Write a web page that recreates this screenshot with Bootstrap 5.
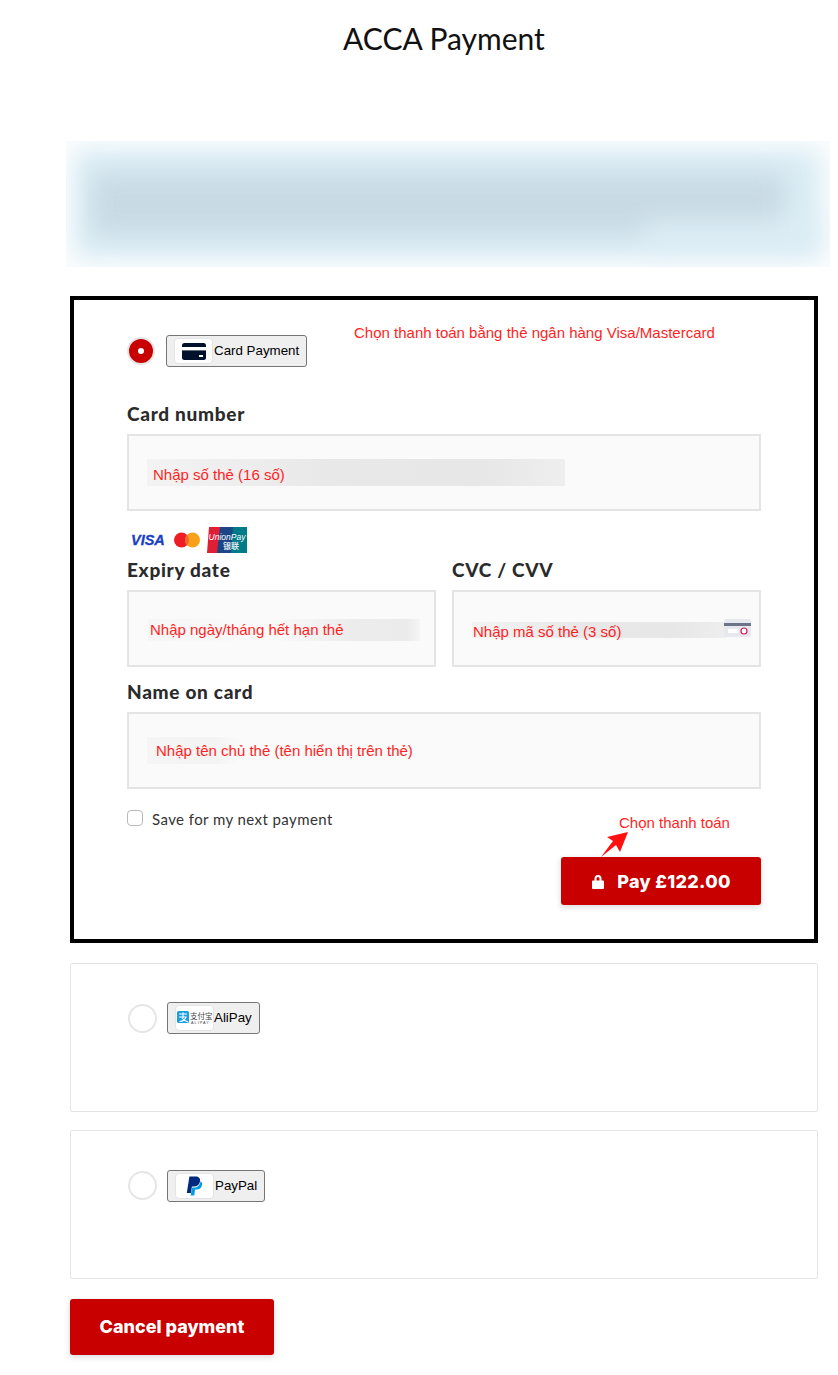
<!DOCTYPE html>
<html lang="en">
<head>
  <meta charset="UTF-8" />
  <meta name="viewport" content="width=device-width, initial-scale=1.0"/>
  <title>ACCA Payment</title>
  <link href="https://cdn.jsdelivr.net/npm/bootstrap@5.3.3/dist/css/bootstrap.min.css" rel="stylesheet"/>
  <style>
    body {
      background: #fff;
      font-family: 'Lato', sans-serif;
      color: #2b2b2b;
    }
    .page-wrap {
      width: 838px;
      height: 1375px;
      padding: 0 20px 0 70px;
      overflow: hidden;
    }
    .page-title {
      font-family: 'Lato', sans-serif;
      font-size: 30px;
      font-weight: 400;
      color: #111;
      text-align: center;
      line-height: 38px;
      margin: 0;
      padding-top: 19px;
      height: 141px;
    }
    .blur-box {
      margin: 0 -12px 29px -4px;
      height: 126px;
      background: #dbedf5;
      box-shadow: inset 0 0 24px 8px rgba(255,255,255,.9);
      overflow: hidden;
      padding: 32px 45px 0 26px;
    }
    .blur-text {
      height: 62px;
      background: #c8dae3;
      filter: blur(12px);
      position: relative;
    }
    .blur-text::after {
      content: "";
      position: absolute;
      right: -30px;
      bottom: -12px;
      width: 170px;
      height: 26px;
      background: #dcedf5;
    }
    .pay-card {
      border: 1px solid #e4e4e4;
      border-radius: 2px;
      height: 149px;
      margin-bottom: 18px;
      padding: 38px 57px 0;
    }
    .pay-card.paypal-card { padding-top: 39px; }
    .pay-card.selected {
      position: relative;
      border: 4px solid #000;
      border-radius: 0;
      height: 647px;
      margin-bottom: 20px;
      padding: 35px 53px 0;
    }
    .method-radio {
      width: 29px;
      height: 29px;
      border: 2.5px solid #e6e6e6;
      border-radius: 50%;
      background: #fff;
      flex: none;
      margin-right: 2px;
    }
    .paypal-card .method-radio { margin-bottom: 2px; }
    .method-radio.on {
      width: 28px;
      height: 28px;
      margin-right: 3px;
      background: #c80000;
      display: flex;
      align-items: center;
      justify-content: center;
    }
    .method-radio.on::after {
      content: "";
      width: 6px;
      height: 6px;
      background: #fff;
      border-radius: 50%;
    }
    .method-btn {
      display: flex;
      align-items: center;
      height: 32px;
      padding: 0 7px;
      background: #efefef;
      border: 1px solid #767676;
      border-radius: 3px;
      font-family: 'Liberation Sans', sans-serif;
      font-size: 13.33px;
      color: #000;
    }
    .method-name { margin-left: 1px; }
    .method-logo {
      width: 39px;
      height: 26px;
      background: #fff;
      border: 1px solid #e4e4e4;
      border-radius: 4px;
      display: flex;
      align-items: center;
      justify-content: center;
      flex: none;
    }
    .hint-top {
      position: absolute;
      left: 280px;
      top: 22px;
      font-family: 'Liberation Sans', sans-serif;
      font-size: 15px;
      color: #ff1f1f;
    }
    .field-label {
      font-size: 19px;
      font-weight: 900;
      line-height: 20px;
      letter-spacing: .7px;
      color: #2b2b2b;
      margin: 0 0 10px;
      display: block;
    }
    .label-number { margin-top: 37px; }
    .label-name { margin-top: 15px; }
    .field-box {
      position: relative;
      height: 77px;
      background: #fafafa;
      border: 2px solid #e4e4e4;
      display: flex;
      align-items: center;
      font-family: 'Liberation Sans', sans-serif;
      font-size: 15px;
      color: #ff1f1f;
    }
    .field-half { width: 309px; }
    .smear {
      margin-left: 18px;
      height: 27px;
      line-height: 28px;
      white-space: nowrap;
      background: linear-gradient(90deg, #f3f3f3, #e8e8e8 45%, #e7e7e7 80%, #eee);
    }
    .smear-number { width: 418px; padding-left: 6px; line-height: 31px; }
    .smear-expiry {
      width: 272px;
      height: 22px;
      line-height: 22px;
      margin-top: 3px;
      padding-left: 2px;
      margin-left: 19px;
      background: linear-gradient(90deg, #f6f6f6, #fafafa 45%, #ececec 75%, #ebebeb 95%, #f5f5f5);
    }
    .smear-cvc {
      width: 254px;
      height: 16px;
      line-height: 20px;
      margin-top: 3px;
      padding-left: 1px;
    }
    .smear-name {
      width: 94px;
      padding-left: 9px;
      background: linear-gradient(90deg, #f5f5f5, #f3f3f3 70%, #fafafa);
    }
    .cvc-tag {
      position: absolute;
      right: 8px;
      top: 27px;
      width: 27px;
      height: 18px;
      border-radius: 2px;
      background: #e6e8ee;
    }
    .cards-row { margin: 16px 0 7px; }
    .save-row {
      height: 24px;
      margin-top: 17px;
    }
    .save-check {
      width: 16px;
      height: 16px;
      margin: 0;
      border: 1px solid #b9b9b9;
      border-radius: 3px;
    }
    .save-label {
      font-size: 15px;
      letter-spacing: .42px;
      color: #333;
      margin: 3px 0 0 1px;
    }
    .hint-pay {
      position: absolute;
      left: 545px;
      top: 512px;
      font-family: 'Liberation Sans', sans-serif;
      font-size: 15px;
      color: #ff1f1f;
    }
    .hint-arrow {
      position: absolute;
      left: 527px;
      top: 532px;
    }
    .pay-row { margin-top: 27px; }
    .btn-acca {
      background: #c80000;
      border: 0;
      border-radius: 3px;
      color: #fff;
      font-weight: 800;
      font-family: 'Inter', sans-serif;
      box-shadow: 0 2px 6px rgba(0,0,0,.15);
    }
    .btn-acca:hover {
      background: #b00000;
      color: #fff;
    }
    .btn-pay {
      width: 200px;
      height: 48px;
      font-size: 18px;
      letter-spacing: .3px;
    }
    .btn-cancel {
      width: 204px;
      height: 56px;
      font-size: 18px;
      margin-top: 2px;
      padding-bottom: 8px;
    }
  </style>
</head>
<body>

<div class="page-wrap">
  <h1 class="page-title">ACCA Payment</h1>

  <!-- blurred notice -->
  <div class="blur-box"><div class="blur-text"></div></div>

  <!-- Card payment -->
  <div class="pay-card selected">
    <div class="d-flex align-items-center gap-2">
      <div class="method-radio on"></div>
      <div class="method-btn">
        <span class="method-logo">
          <svg width="24" height="17" viewBox="0 0 24 17"><rect width="24" height="17" rx="2.5" fill="#00112c"/><rect y="4" width="24" height="3.400" fill="#fff"/><rect x="17" y="12" width="4" height="2" fill="#fff"/></svg>
        </span>
        <span class="method-name">Card Payment</span>
      </div>
    </div>
    <div class="hint-top">Chọn thanh toán bằng thẻ ngân hàng Visa/Mastercard</div>

    <label class="field-label label-number">Card number</label>
    <div class="field-box">
      <div class="smear smear-number">Nhập số thẻ (16 số)</div>
    </div>

    <!-- accepted cards -->
    <div class="d-flex align-items-center cards-row">
      <svg width="120" height="26" viewBox="0 0 120 26">
        <text x="4" y="18" font-family="Liberation Sans" font-size="14.500" font-weight="700" font-style="italic" fill="#1a3fc4" stroke="#1a3fc4" stroke-width=".3">VISA</text>
        <circle cx="54.500" cy="13" r="7.500" fill="#ee1c25"/><circle cx="65.500" cy="13" r="7.500" fill="#f9a01b"/>
        <path d="M60 7.900a7.500 7.500 0 0 1 0 10.200a7.500 7.500 0 0 1 0-10.200z" fill="#f4642a"/>
        <polygon points="82,0 96,0 92,26 80,26" fill="#e01e36"/><polygon points="93,0 108,0 106,26 90,26" fill="#1c4585"/><polygon points="106,0 120,0 120,26 104,26" fill="#007b8a"/>
        <text x="100" y="13" text-anchor="middle" font-family="Liberation Sans" font-size="8.500" font-style="italic" fill="#fff">UnionPay</text>
        <text x="104" y="22" text-anchor="middle" font-family="'Noto Sans CJK SC'" font-size="8" font-weight="700" fill="#dfe9ee">银联</text>
      </svg>
    </div>

    <div class="row g-0 justify-content-between">
      <div class="col-auto">
        <label class="field-label">Expiry date</label>
        <div class="field-box field-half">
          <div class="smear smear-expiry">Nhập ngày/tháng hết hạn thẻ</div>
        </div>
      </div>
      <div class="col-auto">
        <label class="field-label">CVC / CVV</label>
        <div class="field-box field-half">
          <div class="smear smear-cvc">Nhập mã số thẻ (3 số)</div>
          <div class="cvc-tag">
            <svg class="d-block" width="27" height="18" viewBox="0 0 27 18"><rect y="4" width="27" height="3" fill="#6b7488"/><rect x="4" y="10" width="10" height="4" fill="#fff"/><circle cx="20" cy="12" r="3" fill="#fff" stroke="#c81e5a" stroke-width="1.200"/></svg>
          </div>
        </div>
      </div>
    </div>

    <label class="field-label label-name">Name on card</label>
    <div class="field-box">
      <div class="smear smear-name">Nhập tên chủ thẻ (tên hiển thị trên thẻ)</div>
    </div>

    <div class="d-flex align-items-center gap-2 save-row">
      <input class="form-check-input save-check" type="checkbox" id="saveCard">
      <label class="save-label" for="saveCard">Save for my next payment</label>
    </div>

    <div class="hint-pay">Chọn thanh toán</div>
    <svg class="hint-arrow" width="28" height="26" viewBox="0 0 28 26"><polygon points="0,25 12,9 6,5 27,0 19,20 15,13" fill="#ff1010"/></svg>

    <div class="d-flex justify-content-end pay-row">
      <button type="button" class="btn btn-acca btn-pay d-flex align-items-center justify-content-center gap-2">
        <svg width="14" height="15" viewBox="0 0 14 15"><path d="M3.500 7V4.600a3.500 3.500 0 0 1 7 0V7h-2V4.600a1.500 1.500 0 0 0-3 0V7z M2 6.500h10a1 1 0 0 1 1 1V14a1 1 0 0 1-1 1H2a1 1 0 0 1-1-1V7.500a1 1 0 0 1 1-1z" fill="#fff"/></svg>
        <span class="ms-1">Pay £122.00</span>
      </button>
    </div>
  </div>

  <!-- AliPay -->
  <div class="pay-card">
    <div class="d-flex align-items-center gap-2">
      <div class="method-radio"></div>
      <div class="method-btn">
        <span class="method-logo">
          <svg width="37" height="24" viewBox="0 0 37 24"><rect x="1" y="5" width="12" height="12" rx="1.500" fill="#1a9fe0"/><path d="M3 8h8M7 6.500V12M3 11h7c-1 3-4 4.500-6.500 4.500M6 12c1.500 2 3 3 6 4" stroke="#fff" stroke-width="1.100" fill="none"/><text x="14" y="13" font-family="'Noto Sans CJK SC'" font-size="7.500" fill="#444">支付宝</text><text x="15" y="18" font-family="Liberation Sans" font-size="3.800" letter-spacing="1" fill="#444">ALIPAY</text></svg>
        </span>
        <span>AliPay</span>
      </div>
    </div>
  </div>

  <!-- PayPal -->
  <div class="pay-card paypal-card">
    <div class="d-flex align-items-center gap-2">
      <div class="method-radio"></div>
      <div class="method-btn">
        <span class="method-logo">
          <svg width="17" height="20" viewBox="0 0 17 20"><path d="M5 17H.8L3.400.5h6c3.500 0 5.200 2 4.600 5-.6 3.200-3 5-6.200 5H5.900z" fill="#012a7c"/><path d="M14.500 5.200c1.500 1 1.800 2.500 1.400 4.200-.6 2.600-2.600 4-5 4H9L8.300 19.500H4.600L5.200 16.500 6.200 11.500h2c3 0 5.500-1.800 6.300-6.300z" fill="#029ce0"/></svg>
        </span>
        <span class="method-name">PayPal</span>
      </div>
    </div>
  </div>

  <button type="button" class="btn btn-acca btn-cancel">Cancel payment</button>
</div>

<script src="https://cdn.jsdelivr.net/npm/bootstrap@5.3.3/dist/js/bootstrap.bundle.min.js"></script>
</body>
</html>
